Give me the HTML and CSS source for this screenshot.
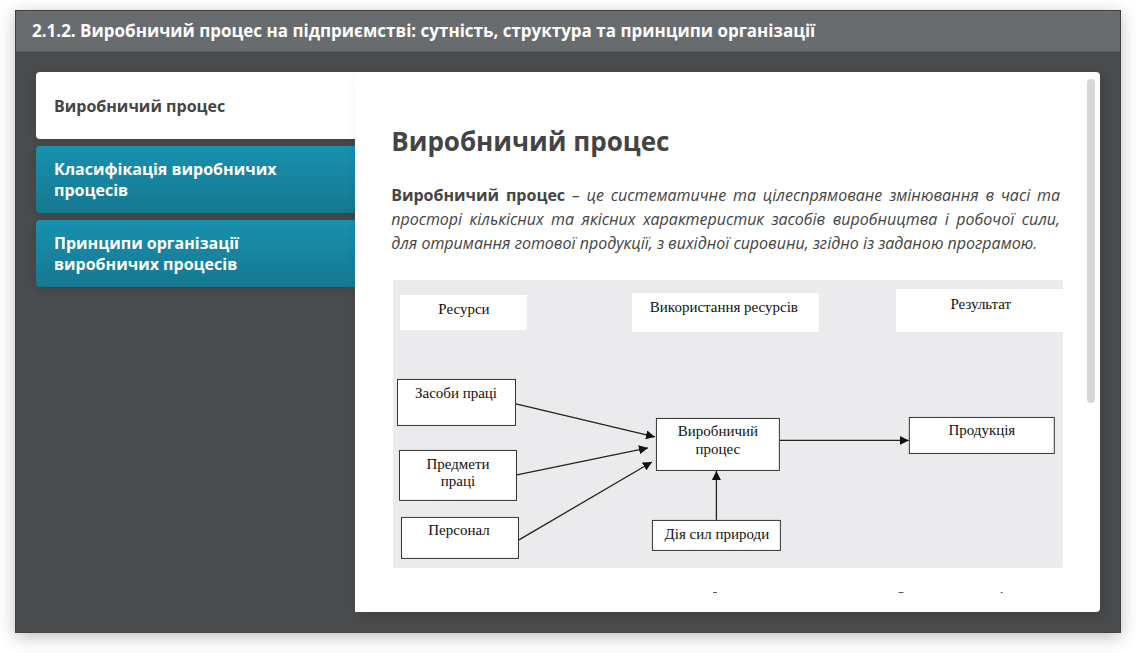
FILE: index.html
```html
<!DOCTYPE html>
<html lang="uk">
<head>
<meta charset="utf-8">
<meta name="viewport" content="width=device-width, initial-scale=1">
<title>Виробничий процес на підприємстві</title>
<link rel="stylesheet" href="styles.css">
</head>
<body>
<div class="player">
  <header class="player-header">2.1.2. Виробничий процес на підприємстві: сутність, структура та принципи організації</header>
  <div class="player-body">
    <nav class="tabs" role="tablist" aria-label="Розділи">
      <button class="tab tab-active" type="button" role="tab" aria-selected="true">Виробничий процес</button>
      <button class="tab" type="button" role="tab" aria-selected="false">Класифікація виробничих процесів</button>
      <button class="tab" type="button" role="tab" aria-selected="false">Принципи організації виробничих процесів</button>
    </nav>
    <main class="panel">
      <article class="content">
        <h1 class="title">Виробничий процес</h1>
        <p class="text"><strong>Виробничий процес</strong> <em>– це систематичне та цілеспрямоване змінювання в часі та просторі кількісних та якісних характеристик засобів виробництва і робочої сили, для отримання готової продукції, з вихідної сировини, згідно із заданою програмою.</em></p>
        <svg class="diagram" viewBox="0 0 670 288" role="img" aria-label="Схема виробничого процесу">
          <defs>
            <marker id="arrow" viewBox="0 0 9 9" refX="9" refY="4.5" markerWidth="9" markerHeight="9" markerUnits="userSpaceOnUse" orient="auto">
              <path d="M0 0L9 4.5L0 9Z" fill="#111"/>
            </marker>
          </defs>
          <rect class="back" width="670" height="288"/>
          <g class="heading-box">
            <rect x="7" y="15" width="127" height="35"/>
            <rect x="239" y="13" width="187" height="39"/>
            <rect x="503" y="9" width="167" height="43"/>
          </g>
          <g class="box">
            <rect x="4.5" y="99.500" width="118" height="46"/>
            <rect x="6.500" y="170.500" width="117" height="50"/>
            <rect x="8.500" y="237.500" width="117" height="41"/>
            <rect x="263.500" y="138.500" width="123" height="52"/>
            <rect x="259.500" y="240.500" width="128" height="30"/>
            <rect x="516.500" y="137.500" width="145" height="36"/>
          </g>
          <g class="arrow">
            <path d="M123 124L262 157"/>
            <path d="M124 195L255 168"/>
            <path d="M126 260L259 182"/>
            <path d="M387 160.500H516"/>
            <path d="M323.500 240V191"/>
          </g>
          <g class="label">
            <text x="71" y="34">Ресурси</text>
            <text x="331" y="32">Використання ресурсів</text>
            <text x="588" y="29">Результат</text>
            <text x="63" y="118">Засоби праці</text>
            <text x="65" y="189">Предмети</text>
            <text x="65" y="206">праці</text>
            <text x="66" y="255">Персонал</text>
            <text x="325" y="156">Виробничий</text>
            <text x="325" y="174">процес</text>
            <text x="324" y="259">Дія сил природи</text>
            <text x="589" y="155">Продукція</text>
          </g>
        </svg>
        <svg class="next-line" viewBox="0 0 670 2" aria-hidden="true">
          <path d="M320 .5h4M507 .5h5M610 .5h2" fill="none" stroke="#555"/>
        </svg>
      </article>
      <div class="scroll-track"><div class="scroll-thumb"></div></div>
    </main>
  </div>
</div>
</body>
</html>
```
FILE: styles.css
```css
* {
  box-sizing: border-box;
}

body {
  margin: 0;
  padding: 10px 15px 21px;
  min-height: 100vh;
  display: flex;
  background: #fff;
  font-family: "Open Sans", "Noto Sans", sans-serif;
  color: #444;
}

.player {
  flex: 1;
  min-width: 0;
  display: flex;
  flex-direction: column;
  border: 1px solid #404244;
  background: #4a4b4d;
  box-shadow: 0 4px 16px rgba(0, 0, 0, 0.25);
}

.player-header {
  padding: 8px 16px;
  border-bottom: 1px solid #5c6063;
  background: #696c6f;
  color: #fff;
  font-size: 17px;
  font-weight: 700;
  line-height: 24px;
}

.player-body {
  flex: 1;
  display: grid;
  grid-template-columns: 3fr 7fr;
  padding: 20px;
}

.tabs {
  display: flex;
  flex-direction: column;
  gap: 7px;
}

.tab {
  min-height: 67px;
  padding: 13px 18px 12px;
  border: 0;
  border-radius: 4px 0 0 4px;
  background: linear-gradient(#1891af, #167890);
  color: #fff;
  font-family: inherit;
  font-size: 16px;
  font-weight: 700;
  line-height: 21px;
  text-align: left;
  box-shadow: 0 2px 8px rgba(0, 0, 0, 0.15);
}

.tab-active {
  background: #fff;
  color: #444;
}

.panel {
  display: flex;
  padding: 7px 5px 18px 36px;
  border-radius: 0 4px 4px 0;
  background: #fff;
  box-shadow: 4px 4px 12px rgba(0, 0, 0, 0.15);
}

.content {
  flex: 1;
  min-width: 0;
  overflow: hidden;
}

.title {
  margin: 44px 0 24px;
  font-size: 26px;
  font-weight: 700;
  line-height: 36px;
}

.text {
  margin: 0 27px 25px 0;
  font-size: 16px;
  line-height: 24px;
  text-align: justify;
}

.diagram {
  display: block;
  width: calc(100% - 26px);
  margin-left: 2px;
}

.back {
  fill: #ebebed;
}

.heading-box rect {
  fill: #fff;
}

.box rect {
  fill: #fff;
  stroke: #333;
}

.arrow path {
  fill: none;
  stroke: #222;
  stroke-width: 1.3px;
  marker-end: url(#arrow);
}

.label text {
  fill: #111;
  font-family: "Liberation Serif", serif;
  font-size: 15px;
  text-anchor: middle;
}

.next-line {
  display: block;
  width: calc(100% - 26px);
  margin: 24px 0 0 2px;
}

.scroll-track {
  width: 8px;
}

.scroll-thumb {
  height: 63%;
  border-radius: 4px;
  background: #d6d6d6;
}
```
